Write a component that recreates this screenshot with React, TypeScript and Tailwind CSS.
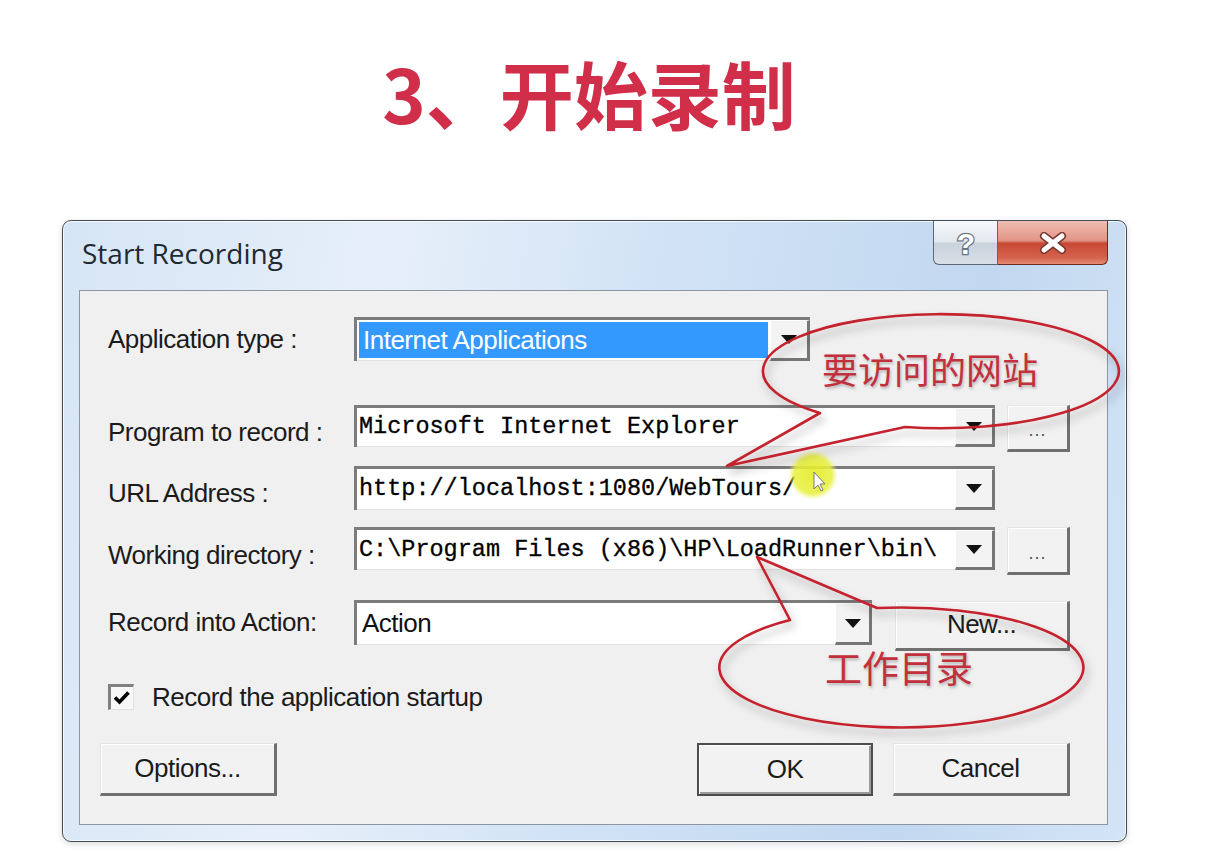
import type { ReactNode } from "react";

function DownArrow() {
  return (
    <svg width="16" height="9" viewBox="0 0 16 9">
      <path d="M0 0H16L8 9Z" fill="#111" />
    </svg>
  );
}

function Combo({ className, btn = "w-[40px]", children }: { className: string; btn?: string; children: ReactNode }) {
  return (
    <div className={`flex h-full bg-white border-t-[3px] border-l-[3px] border-t-[#7c7c7c] border-l-[#7c7c7c] ${className}`}>
      <div className="flex min-w-0 flex-1 items-center overflow-hidden border-b border-b-[#e2e2e2]">{children}</div>
      <div className={`flex items-center justify-center bg-[#f3f3f3] border-t border-l border-t-white border-l-white border-r-[3px] border-b-[3px] border-r-[#767676] border-b-[#767676] ${btn}`}>
        <DownArrow />
      </div>
    </div>
  );
}

function Mono({ children }: { children: ReactNode }) {
  return (
    <span className="whitespace-pre pl-[2px] font-['Liberation_Mono','Courier_New',monospace] text-[23.5px] text-black [-webkit-text-stroke:0.3px_#000]">
      {children}
    </span>
  );
}

function Label({ children, className = "" }: { children: ReactNode; className?: string }) {
  return <div className={`w-[246px] shrink-0 text-[26px] tracking-[-0.5px] text-[#1b1b1b] ${className}`}>{children}</div>;
}

function Btn({ className, children, def = false }: { className: string; children: ReactNode; def?: boolean }) {
  const edge = def
    ? "border-2 border-[#4d4d4d] shadow-[inset_1px_1px_0_#fff,inset_-2px_-2px_0_#9a9a9a]"
    : "border-t border-l border-t-[#e4e4e4] border-l-[#e4e4e4] border-r-[3px] border-b-[3px] border-r-[#707070] border-b-[#707070] shadow-[inset_1px_1px_0_#fff]";
  return (
    <div className={`flex shrink-0 items-center justify-center bg-[#f2f2f2] text-[26px] tracking-[-0.5px] text-[#1b1b1b] ${edge} ${className}`}>
      {children}
    </div>
  );
}

function Dots({ className }: { className: string }) {
  return (
    <Btn className={`ml-[12px] w-[63px] ${className}`}>
      <span className="pt-[6px] text-[18px] tracking-[1px] text-[#555]">...</span>
    </Btn>
  );
}

export default function App() {
  return (
    <div className="relative h-[853px] w-[1208px] overflow-hidden bg-white font-['Liberation_Sans',Arial,sans-serif]">
      {/* Heading */}
      <div className="flex h-[220px] justify-center pr-[30px] pt-[52px]">
        <h1 className="font-['Noto_Sans_CJK_SC',sans-serif] text-[74px] font-bold leading-[80px] text-[#d12e4a]">3、开始录制</h1>
      </div>

      {/* Dialog window */}
      <div className="ml-[62px] flex h-[622px] w-[1065px] flex-col rounded-[9px] border border-[#434d57] bg-[linear-gradient(100deg,#d6e5f5_0%,#e6eff9_28%,#cfe1f5_55%,#c2d8f0_80%,#d3e4f6_100%)] pb-[16px] pl-[16px] pr-[18px] shadow-[inset_0_0_0_1px_rgba(255,255,255,0.75),0_2px_6px_rgba(0,0,0,0.15)]">
        {/* Title bar */}
        <div className="flex h-[69px] items-start">
          <div className="pl-[3px] pt-[14px] font-['Open_Sans',sans-serif] text-[28px] leading-[36px] text-[#1f2a33]">Start Recording</div>
          <div className="ml-auto flex">
            <div className="flex h-[44px] w-[65px] items-center justify-center rounded-bl-[6px] border border-t-0 border-[#5d6774] bg-[linear-gradient(180deg,#f6f8fb_0%,#e3e8ee_48%,#c9d1db_52%,#d9e0e8_100%)]">
              <svg width="26" height="40" viewBox="0 0 26 40" className="overflow-visible">
                <text x="13" y="31" textAnchor="middle" fontSize="30" fontWeight="bold" fontFamily="Liberation Sans, Arial, sans-serif" fill="#fff" stroke="#6a7380" strokeWidth="2.5" paintOrder="stroke">?</text>
              </svg>
            </div>
            <div className="flex h-[44px] w-[110px] items-center justify-center rounded-br-[6px] border border-l-0 border-t-0 border-[#6b2a22] bg-[linear-gradient(180deg,#efbcb2_0%,#e29585_45%,#c84834_52%,#d4634d_85%,#e68b75_100%)]">
              <svg width="30" height="22" viewBox="0 0 30 22">
                <path d="M6 4L24 18M24 4L6 18" stroke="#7a3a32" strokeWidth="8" strokeLinecap="round" />
                <path d="M6 4L24 18M24 4L6 18" stroke="#fff" strokeWidth="5" strokeLinecap="round" />
              </svg>
            </div>
          </div>
        </div>

        {/* Client area */}
        <div className="flex flex-1 flex-col border border-[#8a96a4] bg-[#f0f0f0] pl-[28px] pt-[26px]">
          <div className="flex h-[44px] items-center">
            <Label>Application type :</Label>
            <Combo className="w-[456px] bg-[#f6f6f6]">
              <div className="h-full w-full p-[2px]">
                <div className="flex h-full w-full items-center bg-[#3399ff] pl-[4px] text-[26px] tracking-[-0.5px] text-white">Internet Applications</div>
              </div>
            </Combo>
          </div>

          <div className="mt-[44px] flex h-[42px] items-start">
            <Label className="pt-[8px]">Program to record :</Label>
            <Combo className="w-[641px]">
              <Mono>Microsoft Internet Explorer</Mono>
            </Combo>
            <Dots className="h-[47px]" />
          </div>

          <div className="mt-[19px] flex h-[44px] items-start">
            <Label className="pt-[8px]">URL Address :</Label>
            <Combo className="w-[641px]">
              <Mono>http://localhost:1080/WebTours/</Mono>
            </Combo>
          </div>

          <div className="mt-[17px] flex h-[43px] items-start">
            <Label className="pt-[9px]">Working directory :</Label>
            <Combo className="w-[641px]">
              <Mono>C:\Program Files (x86)\HP\LoadRunner\bin\</Mono>
            </Combo>
            <Dots className="h-[48px]" />
          </div>

          <div className="mt-[30px] flex h-[45px] items-center">
            <Label>Record into Action:</Label>
            <Combo className="w-[518px]" btn="w-[37px]">
              <span className="pl-[5px] text-[26px] tracking-[-0.5px] text-[#111]">Action</span>
            </Combo>
            <Btn className="ml-[23px] mt-[6px] h-[50px] w-[175px]">New...</Btn>
          </div>

          <div className="mt-[39px] flex h-[26px] items-center">
            <div className="flex h-[26px] w-[26px] items-center justify-center border-t-[3px] border-l-[3px] border-t-[#808080] border-l-[#808080] border-r border-b border-r-[#e2e2e2] border-b-[#e2e2e2] bg-[#f7f7f7]">
              <svg width="20" height="18" viewBox="0 0 20 18">
                <path d="M3 8.5L7.5 13L16.5 3.5" fill="none" stroke="#000" strokeWidth="3.6" />
              </svg>
            </div>
            <span className="ml-[18px] text-[26px] tracking-[-0.5px] text-[#1b1b1b]">Record the application startup</span>
          </div>

          <div className="mt-[33px] flex h-[53px] items-start">
            <Btn className="-ml-[8px] h-[53px] w-[177px]">Options...</Btn>
            <Btn def className="ml-[420px] h-[53px] w-[176px]">OK</Btn>
            <Btn className="ml-[20px] h-[53px] w-[177px]">Cancel</Btn>
          </div>
        </div>
      </div>

      {/* Annotations drawn over the screenshot */}
      <svg className="pointer-events-none absolute left-0 top-0" width="1208" height="853" viewBox="0 0 1208 853">
        <defs>
          <filter id="sh" x="-20%" y="-30%" width="140%" height="170%">
            <feDropShadow dx="3" dy="6" stdDeviation="4" floodColor="#000" floodOpacity="0.3" />
          </filter>
          <radialGradient id="glow">
            <stop offset="0%" stopColor="#e4ee2c" stopOpacity="0.95" />
            <stop offset="75%" stopColor="#e8f03c" stopOpacity="0.85" />
            <stop offset="100%" stopColor="#eef470" stopOpacity="0" />
          </radialGradient>
        </defs>
        <circle cx="813" cy="475" r="25" fill="url(#glow)" />
        <path d="M814 472V489L818 485L821 491L823 490L820 484H825Z" fill="#fff" stroke="#777" strokeWidth="1" />
        <path d="M820 413A178 57 0 1 1 905 427L727 466Z" fill="none" stroke="#c4232d" strokeWidth="2.6" strokeLinejoin="round" filter="url(#sh)" />
        <path d="M877 608A182 60 0 1 1 790 620L757 557Z" fill="none" stroke="#c4232d" strokeWidth="2.6" strokeLinejoin="round" filter="url(#sh)" />
      </svg>
      <span className="pointer-events-none absolute left-[822px] top-[346px] font-['Noto_Sans_CJK_SC',sans-serif] text-[36px] leading-[44px] text-[#c3303d] [text-shadow:1px_2px_3px_rgba(0,0,0,0.25)]">要访问的网站</span>
      <span className="pointer-events-none absolute left-[825px] top-[645px] font-['Noto_Sans_CJK_SC',sans-serif] text-[37px] leading-[44px] text-[#c3303d] [text-shadow:1px_2px_3px_rgba(0,0,0,0.25)]">工作目录</span>
    </div>
  );
}
